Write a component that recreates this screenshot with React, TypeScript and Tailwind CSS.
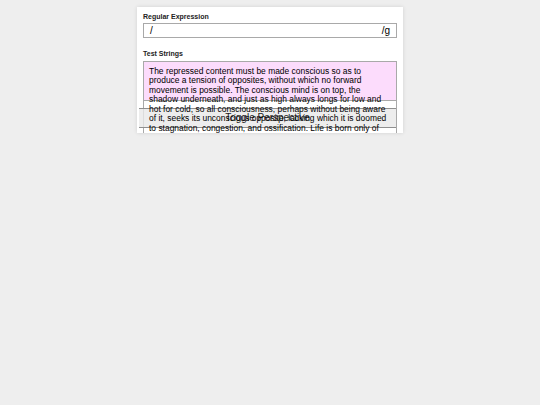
const text =
  "The repressed content must be made conscious so as to produce a tension of opposites, without which no forward movement is possible. The conscious mind is on top, the shadow underneath, and just as high always longs for low and hot for cold, so all consciousness, perhaps without being aware of it, seeks its unconscious opposite, lacking which it is doomed to stagnation, congestion, and ossification. Life is born only of the spark of opposites.";

const App = () => {
    return (
        <div className="w-[540px] h-[405px] bg-[#eeeeee] font-['Liberation_Sans',Arial,sans-serif] text-[#222]">
            <div className="pt-[7px] pl-[137px]">
                <div className="w-[266px] h-[126px] bg-white overflow-hidden shadow-[0_0_4px_rgba(0,0,0,0.12)] px-[6px] pt-[5px]">
                    <div className="text-[7px] leading-[9px] font-bold">Regular Expression</div>
                    <div className="mt-[2px] h-[15px] border border-[#a9a9a9] flex items-center justify-between px-[6px] text-[10px] leading-[13px] text-black">
                        <span>/</span>
                        <span>/g</span>
                    </div>

                    <div className="mt-[11px] text-[7px] leading-[9px] font-bold">Test Strings</div>
                    <div className="relative mt-[3px] h-[120px] border border-[#a9a9a9]">
                        <div className="absolute left-0 right-0 top-0 h-[39px] bg-[#fcdcfc] border-b border-[#a9a9a9]" />
                        <button className="absolute left-[-5px] right-0 top-[46px] h-[20px] bg-[#e9e9e9]/80 border-y border-[#8f8f8f] text-[10px] leading-[18px] text-[#222]">
                            Toggle Perspective
                        </button>
                        <div className="relative px-[5px] pt-[5px] text-[8.45px] leading-[9.45px] text-black">
                            {text}
                        </div>
                    </div>
                </div>
            </div>
        </div>
    );
};

export default App;
